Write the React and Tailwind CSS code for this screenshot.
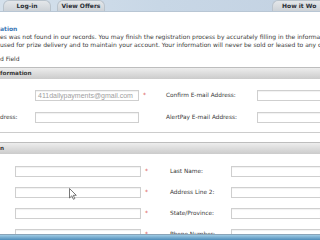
import React from 'react';

const Field = ({ w, placeholder }) => (
    <div className={`${w} shrink-0 h-[11px] border border-[#cfcfcf] bg-white shadow-[inset_0_1px_1px_rgba(0,0,0,0.06)] flex items-center px-[2px] overflow-hidden`}>
        {placeholder && (
            <span className="text-[#a0a0a0] text-[7px] leading-none whitespace-nowrap" style={{ fontFamily: '"Liberation Sans", Arial, sans-serif' }}>
                {placeholder}
            </span>
        )}
    </div>
);

const Star = () => <span className="text-[#d9534f] text-[6px] leading-none">*</span>;

const Tab = ({ label, className }) => (
    <div className={`h-[11px] w-[48px] rounded-t-[6px] bg-gradient-to-b from-[#e4e7ea] to-[#cdd2d7] border-t border-x border-[#b9c3cc] flex items-center justify-center ${className}`}>
        <span className="text-[6px] font-bold text-[#2a2f35] leading-none whitespace-nowrap">{label}</span>
    </div>
);

const SectionBar = ({ text, className }) => (
    <div className={`h-[12px] border-t border-[#bdbdbd] bg-gradient-to-b from-[#ededed] to-[#cbcbcb] flex items-center ${className}`}>
        <span className="text-[5.7px] font-bold text-[#333] leading-none">{text}</span>
    </div>
);

export default function App() {
    return (
        <div className="w-[320px] h-[240px] overflow-hidden bg-white relative flex flex-col text-[#3a3a3a]" style={{ fontFamily: '"DejaVu Sans", Verdana, sans-serif' }}>
            <div className="h-[234px] overflow-hidden shrink-0">
                {/* Tabs */}
                <div className="h-[12px] bg-gradient-to-r from-[#d5e1ec] via-[#c8d7e6] to-[#c3d2e2] border-b border-[#b8c6d4] flex items-end">
                    <Tab label="Log-in" className="ml-[3px]" />
                    <Tab label="View Offers" className="ml-[6px]" />
                    <div className="flex-1" />
                    <div className="h-[11px] w-[48px] rounded-tl-[6px] bg-gradient-to-b from-[#e4e7ea] to-[#cdd2d7] border-t border-l border-[#b9c3cc] flex items-center pl-[9px]">
                        <span className="text-[6px] font-bold text-[#2a2f35] leading-none whitespace-nowrap">How it Wo</span>
                    </div>
                </div>

                {/* Intro */}
                <div className="pt-[14px] text-[6px] leading-[8px] whitespace-nowrap overflow-hidden">
                    <div className="font-bold text-[#3a78b5] leading-[6px]">ation</div>
                    <div className="mt-[1px]">es was not found in our records. You may finish the registration process by accurately filling in the information</div>
                    <div>used for prize delivery and to maintain your account. Your information will never be sold or leased to any co</div>
                    <div className="mt-[6px]">d Field</div>
                </div>

                <SectionBar text="formation" className="mt-[4px]" />

                {/* Account fields */}
                <div className="h-[54px] border-b border-[#cccccc] pt-[11px] flex flex-col gap-[11px] text-[5.8px] leading-none whitespace-nowrap">
                    <div className="flex items-center">
                        <div className="w-[35px] shrink-0" />
                        <Field w="w-[104px]" placeholder="411dailypayments@gmail.com" />
                        <div className="w-[27px] shrink-0 pl-[4px]"><Star /></div>
                        <div className="w-[91px] shrink-0">Confirm E-mail Address:</div>
                        <Field w="w-[70px]" />
                    </div>
                    <div className="flex items-center">
                        <div className="w-[35px] shrink-0">dress:</div>
                        <Field w="w-[104px]" />
                        <div className="w-[27px] shrink-0" />
                        <div className="w-[91px] shrink-0">AlertPay E-mail Address:</div>
                        <Field w="w-[70px]" />
                    </div>
                </div>

                <SectionBar text="n" className="mt-[9px]" />

                {/* Personal fields */}
                <div className="pt-[12px] flex flex-col gap-[10px] text-[5.8px] leading-none whitespace-nowrap">
                    {['Last Name:', 'Address Line 2:', 'State/Province:', 'Phone Number:'].map((label) => (
                        <div key={label} className="flex items-center">
                            <div className="w-[15px] shrink-0" />
                            <Field w="w-[126px]" />
                            <div className="w-[29px] shrink-0 pl-[4px]"><Star /></div>
                            <div className="w-[61px] shrink-0">{label}</div>
                            <Field w="w-[90px]" />
                        </div>
                    ))}
                </div>
            </div>

            {/* Window edge */}
            <div className="flex-1 border-t border-[#8aa4b8] bg-gradient-to-b from-[#9fcbe4] to-[#4f8dba]" />

            {/* Mouse pointer */}
            <svg className="absolute left-[69px] top-[188px]" width="8" height="12" viewBox="0 0 8 12">
                <path d="M0.5 0.5 L0.5 10 L2.8 7.8 L4.4 11.3 L5.8 10.6 L4.3 7.3 L7.3 7.3 Z" fill="#fff" stroke="#555" strokeWidth="0.8" strokeLinejoin="round" />
            </svg>
        </div>
    );
}
